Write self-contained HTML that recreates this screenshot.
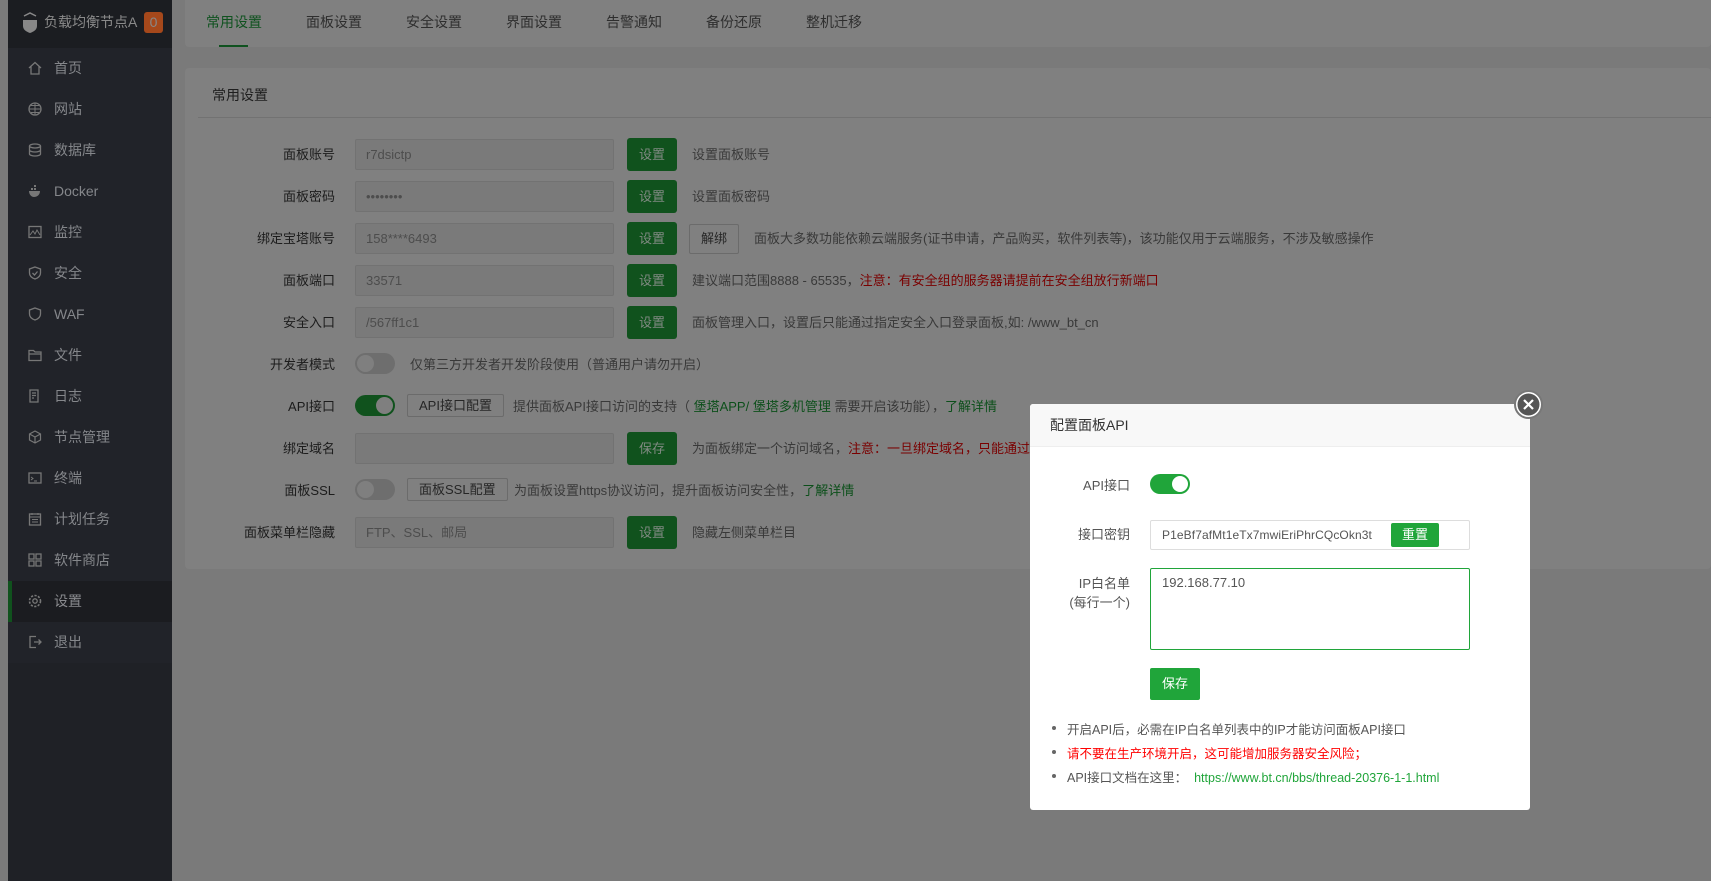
<!DOCTYPE html>
<html><head><meta charset="utf-8"><style>
*{box-sizing:border-box;margin:0;padding:0}
body{width:1711px;height:881px;overflow:hidden;background:#7a7a7a;font-family:"Liberation Sans","Noto Sans CJK SC",sans-serif;font-size:13px;position:relative}
.abs{position:absolute}
.side{left:8px;top:0;width:164px;height:881px;background:#1f2126}
.shead{left:8px;top:0;width:164px;height:48px;background:#1b1d21}
.menu{left:8px;top:48px;width:164px;height:615px;background:#212329}
.mi{position:absolute;left:0;width:164px;height:41px;color:#85878b;font-size:14px;line-height:41px;padding-left:46px}
.mi svg{position:absolute;left:20px;top:13px;width:14px;height:14px}
.tabs{left:185px;top:0;width:1526px;height:47px;background:#808080;border-radius:0 0 4px 4px}
.tab{position:absolute;top:12px;font-size:14px;color:#2e2e2e}
.card{left:185px;top:68px;width:1526px;height:501px;background:#808080;border-radius:4px}
.lbl{position:absolute;right:1376px;font-size:13px;color:#1c1c1c;text-align:right;white-space:nowrap}
.inp{position:absolute;left:355px;width:259px;height:31px;background:#7a7a7a;border:1px solid #727272;border-radius:2px;color:#4d4d4d;padding-left:10px;line-height:29px;font-size:13px}
.btn{position:absolute;left:627px;width:50px;height:33px;background:#10521d;border-radius:3px;color:#808a82;text-align:center;line-height:33px;font-size:13px}
.desc{position:absolute;left:692px;color:#393939;font-size:13px;white-space:nowrap}
.red{color:#7a0000}.grn{color:#0c4f1a}
.tg{position:absolute;left:355px;width:40px;height:21px;border-radius:11px;background:#6e6e6e}
.tg::after{content:"";position:absolute;left:2px;top:2px;width:17px;height:17px;border-radius:50%;background:#7f7f7f}
.tg.on{background:#10521d}.tg.on::after{left:21px}
.obtn{position:absolute;height:23px;border:1px solid #6b6b6b;border-radius:2px;color:#262626;line-height:21px;padding:0 11px;font-size:13px;background:#808080}
.modal{left:1030px;top:404px;width:500px;height:406px;background:#fff;border-radius:3px;overflow:hidden}
.mt{height:43px;background:#f8f8f8;border-bottom:1px solid #eee;padding-left:20px;line-height:43px;font-size:14px;color:#333}
.ml{position:absolute;right:400px;color:#555;font-size:13px;text-align:right}
.mtg{position:absolute;left:120px;top:70px;width:40px;height:20px;border-radius:10px;background:#20a53a}
.mtg::after{content:"";position:absolute;right:2px;top:2px;width:16px;height:16px;border-radius:50%;background:#fff}
.li{position:absolute;left:22px;font-size:12.5px;color:#555;white-space:nowrap;padding-left:15px}
.li::before{content:"";position:absolute;left:0;top:7px;width:4px;height:4px;border-radius:50%;background:#666}
</style></head><body>
<div class="abs side"></div>
<div class="abs shead"></div>
<div class="abs" style="left:22px;top:12px;width:16px;height:22px">
<svg width="16" height="22" viewBox="0 0 16 22"><path d="M2 4 L8 1 L14 4" stroke="#888" stroke-width="1.5" fill="none"/><path d="M1 8 h14 v6 c0 4-4 6-7 7 c-3-1-7-3-7-7z" fill="#888"/></svg></div>
<div class="abs" style="left:44px;top:12px;font-size:14px;color:#8a8a8a">负载均衡节点A</div>
<div class="abs" style="left:144px;top:12px;width:19px;height:21px;background:#a5481b;border-radius:3px;color:#888;font-size:14px;text-align:center;line-height:21px">0</div>
<div class="abs menu">
<div class="mi" style="top:0"><svg viewBox="0 0 14 14"><path d="M1 7 L7 1.5 L13 7 M3 5.5 V13 H11 V5.5" stroke="#777" fill="none" stroke-width="1.3"/></svg>首页</div>
<div class="mi" style="top:41px"><svg viewBox="0 0 14 14"><circle cx="7" cy="7" r="6" stroke="#777" fill="none" stroke-width="1.3"/><path d="M1 7h12M7 1v12M3 3.5h8M3 10.5h8" stroke="#777" stroke-width="1"/></svg>网站</div>
<div class="mi" style="top:82px"><svg viewBox="0 0 14 14"><ellipse cx="7" cy="3" rx="5.5" ry="2" stroke="#777" fill="none" stroke-width="1.3"/><path d="M1.5 3v8c0 1 2.5 2 5.5 2s5.5-1 5.5-2V3M1.5 7c0 1 2.5 2 5.5 2s5.5-1 5.5-2" stroke="#777" fill="none" stroke-width="1.3"/></svg>数据库</div>
<div class="mi" style="top:123px"><svg viewBox="0 0 14 14"><path d="M1 7h11c0 4-3 6-6 6S1 10 1 7z M3 4h2v2H3zM6 4h2v2H6zM6 1h2v2H6z" fill="#777"/></svg>Docker</div>
<div class="mi" style="top:164px"><svg viewBox="0 0 14 14"><rect x="1" y="1.5" width="12" height="11" stroke="#777" fill="none" stroke-width="1.3"/><path d="M2 10l3-4 2 3 2-4 3 5" stroke="#777" fill="none"/></svg>监控</div>
<div class="mi" style="top:205px"><svg viewBox="0 0 14 14"><path d="M7 1L12.5 3v4c0 3-2.5 5-5.5 6C4 12 1.5 10 1.5 7V3z" stroke="#777" fill="none" stroke-width="1.3"/><path d="M4.5 7l2 2 3-3.5" stroke="#777" fill="none" stroke-width="1.3"/></svg>安全</div>
<div class="mi" style="top:246px"><svg viewBox="0 0 14 14"><path d="M7 1L12.5 3v4c0 3-2.5 5-5.5 6C4 12 1.5 10 1.5 7V3z" stroke="#777" fill="none" stroke-width="1.3"/></svg>WAF</div>
<div class="mi" style="top:287px"><svg viewBox="0 0 14 14"><path d="M1 2.5h4.5l1.5 1.5H13v8.5H1z M1 6h12" stroke="#777" fill="none" stroke-width="1.3"/></svg>文件</div>
<div class="mi" style="top:328px"><svg viewBox="0 0 14 14"><path d="M2 1h8v12H2z M4 4h4M4 6.5h4M4 9h2" stroke="#777" fill="none" stroke-width="1.3"/></svg>日志</div>
<div class="mi" style="top:369px"><svg viewBox="0 0 14 14"><path d="M7 1l5.5 3v6L7 13 1.5 10V4z M1.5 4L7 7l5.5-3M7 7v6" stroke="#777" fill="none" stroke-width="1.2"/></svg>节点管理</div>
<div class="mi" style="top:410px"><svg viewBox="0 0 14 14"><rect x="1" y="2" width="12" height="10" stroke="#777" fill="none" stroke-width="1.3"/><path d="M3 6l2 1.5L3 9M6 10h3" stroke="#777" fill="none"/></svg>终端</div>
<div class="mi" style="top:451px"><svg viewBox="0 0 14 14"><rect x="1.5" y="2" width="11" height="11" stroke="#777" fill="none" stroke-width="1.3"/><path d="M1.5 5h11M4 1v2M10 1v2M4 7.5h6M4 10h6" stroke="#777" fill="none"/></svg>计划任务</div>
<div class="mi" style="top:492px"><svg viewBox="0 0 14 14"><path d="M1 1h5v5H1zM8 1h5v5H8zM1 8h5v5H1zM8 8h5v5H8z" stroke="#777" fill="none" stroke-width="1.3"/></svg>软件商店</div>
<div class="mi" style="top:533px;background:#1b1c20;color:#8a8b8f"><div style="position:absolute;left:0;top:0;width:4px;height:41px;background:#10521d"></div><svg viewBox="0 0 14 14"><circle cx="7" cy="7" r="2.2" stroke="#777" fill="none" stroke-width="1.3"/><circle cx="7" cy="7" r="5.5" stroke="#777" fill="none" stroke-width="1.6" stroke-dasharray="2.2 1.4"/></svg>设置</div>
<div class="mi" style="top:574px"><svg viewBox="0 0 14 14"><path d="M8 1.5H2v11h6 M6 7h7 M10.5 4.5L13 7l-2.5 2.5" stroke="#777" fill="none" stroke-width="1.3"/></svg>退出</div>
</div>

<div class="abs tabs">
<div class="tab" style="left:21px;color:#0f521f">常用设置</div>
<div style="position:absolute;left:34px;top:45px;width:29px;height:2px;background:#0f521f"></div>
<div class="tab" style="left:121px">面板设置</div>
<div class="tab" style="left:221px">安全设置</div>
<div class="tab" style="left:321px">界面设置</div>
<div class="tab" style="left:421px">告警通知</div>
<div class="tab" style="left:521px">备份还原</div>
<div class="tab" style="left:621px">整机迁移</div>
</div>

<div class="abs card"></div>
<div class="abs" style="left:212px;top:85px;font-size:14px;color:#1e1e1e">常用设置</div>
<div class="abs" style="left:198px;top:117px;width:1513px;height:1px;background:#727272"></div>

<div class="lbl" style="top:144px">面板账号</div><div class="inp" style="top:139px">r7dsictp</div><div class="btn" style="top:138px">设置</div><div class="desc" style="top:144px">设置面板账号</div>
<div class="lbl" style="top:186px">面板密码</div><div class="inp" style="top:181px">••••••••</div><div class="btn" style="top:180px">设置</div><div class="desc" style="top:186px">设置面板密码</div>
<div class="lbl" style="top:228px">绑定宝塔账号</div><div class="inp" style="top:223px">158****6493</div><div class="btn" style="top:222px">设置</div><div class="obtn" style="left:689px;top:224px;height:30px;line-height:28px">解绑</div><div class="desc" style="left:754px;top:228px">面板大多数功能依赖云端服务(证书申请，产品购买，软件列表等)，该功能仅用于云端服务，不涉及敏感操作</div>
<div class="lbl" style="top:270px">面板端口</div><div class="inp" style="top:265px">33571</div><div class="btn" style="top:264px">设置</div><div class="desc" style="top:270px">建议端口范围8888 - 65535，<span class="red">注意：有安全组的服务器请提前在安全组放行新端口</span></div>
<div class="lbl" style="top:312px">安全入口</div><div class="inp" style="top:307px">/567ff1c1</div><div class="btn" style="top:306px">设置</div><div class="desc" style="top:312px">面板管理入口，设置后只能通过指定安全入口登录面板,如: /www_bt_cn</div>
<div class="lbl" style="top:354px">开发者模式</div><div class="tg" style="top:353px"></div><div class="desc" style="left:410px;top:354px">仅第三方开发者开发阶段使用（普通用户请勿开启）</div>
<div class="lbl" style="top:396px">API接口</div><div class="tg on" style="top:395px"></div><div class="obtn" style="left:407px;top:394px">API接口配置</div><div class="desc" style="left:513px;top:396px">提供面板API接口访问的支持（ <span class="grn">堡塔APP/ 堡塔多机管理</span> 需要开启该功能），<span class="grn">了解详情</span></div>
<div class="lbl" style="top:438px">绑定域名</div><div class="inp" style="top:433px"></div><div class="btn" style="top:432px">保存</div><div class="desc" style="top:438px">为面板绑定一个访问域名，<span class="red">注意：一旦绑定域名，只能通过域名访问面板</span></div>
<div class="lbl" style="top:480px">面板SSL</div><div class="tg" style="top:479px"></div><div class="obtn" style="left:407px;top:478px">面板SSL配置</div><div class="desc" style="left:514px;top:480px">为面板设置https协议访问，提升面板访问安全性，<span class="grn">了解详情</span></div>
<div class="lbl" style="top:522px">面板菜单栏隐藏</div><div class="inp" style="top:517px">FTP、SSL、邮局</div><div class="btn" style="top:516px">设置</div><div class="desc" style="top:522px">隐藏左侧菜单栏目</div>

<div class="abs modal">
<div class="mt">配置面板API</div>
<div class="ml" style="top:71px">API接口</div>
<div class="mtg"></div>
<div class="ml" style="top:120px">接口密钥</div>
<div style="position:absolute;left:120px;top:116px;width:320px;height:30px;border:1px solid #ddd;border-radius:2px;padding-left:11px;line-height:28px;color:#555;font-size:12px;letter-spacing:0.1px">P1eBf7afMt1eTx7mwiEriPhrCQcOkn3t</div>
<div style="position:absolute;left:361px;top:119px;width:48px;height:24px;background:#20a53a;border-radius:2px;color:#fff;text-align:center;line-height:24px;font-size:13px">重置</div>
<div class="ml" style="top:170px;line-height:19px">IP白名单<br>(每行一个)</div>
<div style="position:absolute;left:120px;top:164px;width:320px;height:82px;border:1px solid #20a53a;border-radius:2px;padding:6px 11px;color:#555;font-size:13px">192.168.77.10</div>
<div style="position:absolute;left:120px;top:264px;width:50px;height:32px;background:#20a53a;border-radius:2px;color:#fff;text-align:center;line-height:32px;font-size:13px">保存</div>
<div class="li" style="top:315px">开启API后，必需在IP白名单列表中的IP才能访问面板API接口</div>
<div class="li" style="top:339px;color:#f00">请不要在生产环境开启，这可能增加服务器安全风险；</div>
<div class="li" style="top:363px">API接口文档在这里：&nbsp; <span style="color:#20a53a">https://www.bt.cn/bbs/thread-20376-1-1.html</span></div>
</div>
<div class="abs" style="left:1514px;top:390px;width:29px;height:29px;border-radius:50%;background:#fff;border:2px solid #777">
<svg width="25" height="25" viewBox="0 0 25 25" style="position:absolute;left:0;top:0"><circle cx="12.5" cy="12.5" r="11" fill="#555"/><path d="M8 8l9 9M17 8l-9 9" stroke="#fff" stroke-width="2.2"/></svg></div>
</body></html>
